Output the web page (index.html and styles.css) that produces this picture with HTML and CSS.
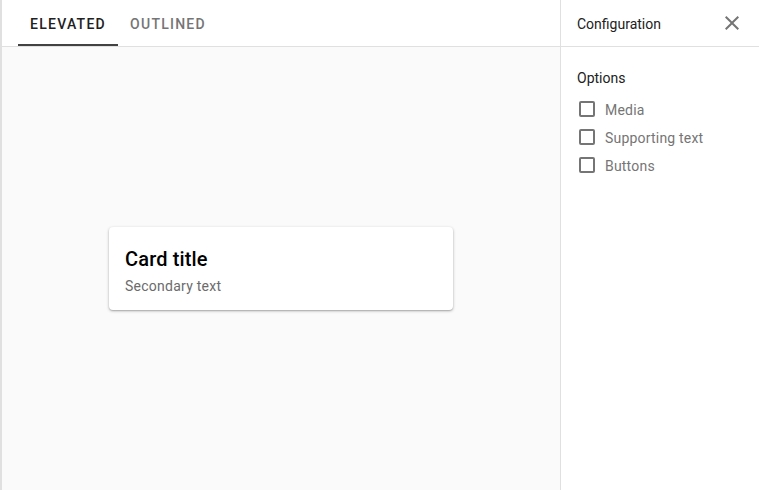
FILE: index.html
```html
<!DOCTYPE html>
<html lang="en">
<head>
    <meta charset="UTF-8">
    <meta name="viewport" content="width=device-width, initial-scale=1.0">
    <title>Card demo</title>
    <link rel="stylesheet" href="styles.css">
</head>
<body>
    <div class="app">
        <div class="demo">
            <div class="tab-bar">
                <div class="tab tab-active">Elevated</div>
                <div class="tab">Outlined</div>
            </div>
            <div class="stage">
                <div class="card">
                    <div class="card-title">Card title</div>
                    <div class="card-subtitle">Secondary text</div>
                </div>
            </div>
        </div>
        <div class="config">
            <div class="config-header">
                <div class="config-title">Configuration</div>
                <button class="close-button" type="button" aria-label="Close">
                    <svg width="24" height="24" viewBox="0 0 24 24">
                        <path d="M19 6.41L17.59 5 12 10.59 6.41 5 5 6.41 10.59 12 5 17.59 6.41 19 12 13.41 17.59 19 19 17.59 13.41 12z"/>
                    </svg>
                </button>
            </div>
            <div class="config-body">
                <div class="section-label">Options</div>
                <label class="option"><span class="box"></span><span class="option-text">Media</span></label>
                <label class="option"><span class="box"></span><span class="option-text">Supporting text</span></label>
                <label class="option"><span class="box"></span><span class="option-text">Buttons</span></label>
            </div>
        </div>
    </div>
</body>
</html>
```

FILE: styles.css
```css
html, body {
    margin: 0;
    height: 100%;
}
body {
    font-family: Roboto, "Liberation Sans", Arial, sans-serif;
    color: #212121;
    background: #fff;
}
.app {
    display: flex;
    height: 100%;
    border-left: 2px solid #e0e0e0;
    box-sizing: border-box;
}
.demo {
    flex: 1;
    display: flex;
    flex-direction: column;
    background: #fafafa;
}
.tab-bar {
    display: flex;
    height: 46px;
    padding-left: 16px;
    background: #fff;
    border-bottom: 1px solid #e0e0e0;
}
.tab {
    width: 100px;
    display: flex;
    align-items: center;
    justify-content: center;
    font-size: 14px;
    font-weight: 500;
    letter-spacing: 1.25px;
    text-transform: uppercase;
    color: #757575;
    box-sizing: border-box;
    border-bottom: 2px solid transparent;
    padding-top: 4px;
}
.tab-active {
    color: #212121;
    border-bottom-color: #424242;
}
.stage {
    flex: 1;
    display: flex;
    align-items: center;
    justify-content: center;
}
.card {
    width: 344px;
    box-sizing: border-box;
    padding: 16px 16px 14px;
    background: #fff;
    border-radius: 4px;
    box-shadow: 0 1px 3px rgba(0, 0, 0, 0.3), 0 1px 1px rgba(0, 0, 0, 0.1);
}
.card-title {
    font-size: 20px;
    font-weight: 500;
    line-height: 32px;
    letter-spacing: 0.15px;
    color: #000;
}
.card-subtitle {
    margin-top: 1px;
    font-size: 14px;
    line-height: 20px;
    color: #6b6b6b;
    letter-spacing: 0.25px;
}
.config {
    width: 198px;
    border-left: 1px solid #e0e0e0;
    background: #fff;
}
.config-header {
    display: flex;
    align-items: center;
    justify-content: space-between;
    height: 46px;
    padding-left: 16px;
    padding-right: 15px;
    border-bottom: 1px solid #e0e0e0;
}
.config-title {
    font-size: 14px;
    padding-top: 2px;
}
.close-button {
    width: 24px;
    height: 24px;
    padding: 0;
    border: none;
    background: none;
    fill: #757575;
    cursor: pointer;
}
.config-body {
    padding: 20px 16px;
}
.section-label {
    font-size: 14px;
    line-height: 20px;
    margin-bottom: 8px;
    padding-top: 1px;
}
.option {
    display: flex;
    align-items: center;
    height: 28px;
    margin-top: -1px;
    margin-bottom: 1px;
    font-size: 14px;
    color: #757575;
    letter-spacing: 0.2px;
    cursor: pointer;
}
.option-text {
    padding-top: 2px;
}
.box {
    width: 16px;
    height: 16px;
    box-sizing: border-box;
    border: 2px solid #757575;
    border-radius: 2px;
    margin-left: 2px;
    margin-right: 10px;
}
```
